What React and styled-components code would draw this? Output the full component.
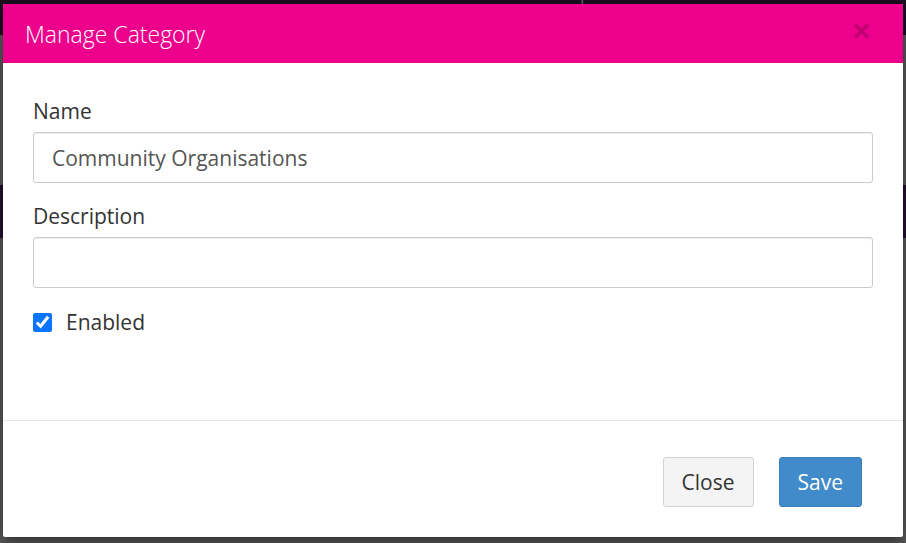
import React from 'react'
import styled, {createGlobalStyle} from 'styled-components'

const Global = createGlobalStyle`
  html, body {
    margin: 0;
    padding: 0;
    background: #5b5b5b;
    font-family: 'Open Sans', 'Liberation Sans', sans-serif;
  }
  * { box-sizing: border-box; }
`

const Page = styled.div`
  position: relative;
  width: 906px;
  height: 543px;
  overflow: hidden;
  display: flex;
  flex-direction: column;
  background: #5b5b5b;
`

const NavBar = styled.div`
  height: 35px;
  background: #1b0e20;
  display: flex;
  gap: 28px;
  padding-left: 4px;
  font-size: 24px;
  font-weight: 300;
  color: #7d7680;
  white-space: nowrap;
  span {
    margin-top: -24px;
    line-height: 30px;
  }
`

const Band = styled.div`
  margin-top: 150px;
  height: 53px;
  background: #24112f;
`

const Modal = styled.div`
  position: absolute;
  left: 3px;
  top: 4px;
  width: 900px;
  height: 533px;
  background: #fff;
  border-radius: 2px;
  box-shadow: 0 5px 15px rgba(0, 0, 0, 0.5);
  display: flex;
  flex-direction: column;
  color: #333;
`

const Header = styled.div`
  height: 59px;
  background: #ec008c;
  display: flex;
  align-items: center;
  justify-content: space-between;
  padding: 0 33px 0 22px;
  border-radius: 2px 2px 0 0;
`

const Title = styled.h4`
  margin: 0;
  font-size: 23px;
  font-weight: 300;
  color: #fff;
`

const CloseX = styled.button`
  border: 0;
  background: none;
  padding: 0;
  margin-top: -6px;
  font-family: 'Liberation Sans', sans-serif;
  font-size: 30px;
  font-weight: 700;
  line-height: 1;
  color: #000;
  opacity: 0.2;
`

const Body = styled.div`
  flex: 1;
  padding: 34px 30px 0;
  border-bottom: 1px solid #e5e5e5;
`

const Group = styled.div`
  margin-bottom: ${p => p.$gap || 0}px;
`

const Label = styled.label`
  display: block;
  font-size: 21px;
  line-height: 29px;
  margin-bottom: 6px;
  color: #333;
`

const Input = styled.input`
  display: block;
  width: 100%;
  height: 51px;
  padding: 0 18px;
  border: 1px solid #ccc;
  border-radius: 3px;
  box-shadow: inset 0 1px 1px rgba(0, 0, 0, 0.075);
  font-family: inherit;
  font-size: 21px;
  color: #555;
  outline: none;
`

const Check = styled.label`
  display: flex;
  align-items: center;
  gap: 14px;
  margin-top: 20px;
  font-size: 21px;
  color: #333;
  input {
    width: 19px;
    height: 19px;
    margin: 0;
    accent-color: #0b75ff;
  }
`

const Footer = styled.div`
  height: 116px;
  display: flex;
  justify-content: flex-end;
  align-items: flex-start;
  gap: 25px;
  padding: 36px 41px 0 0;
`

const Button = styled.button`
  height: 50px;
  padding: 0 18px;
  border-radius: 3px;
  font-family: inherit;
  font-size: 21px;
  border: 1px solid ${p => (p.$primary ? '#3a80bd' : '#d2d2d2')};
  background: ${p => (p.$primary ? '#428bca' : '#f4f4f4')};
  color: ${p => (p.$primary ? '#fff' : '#333')};
`

export default function App() {
  return (
    <Page>
      <Global />
      <NavBar>
        <span>Grants</span>
        <span>Invoice</span>
        <span>Actions</span>
        <span>Artworks ▾</span>
        <span>Artists</span>
        <span>Reports</span>
      </NavBar>
      <Band />
      <Modal>
        <Header>
          <Title>Manage Category</Title>
          <CloseX>×</CloseX>
        </Header>
        <Body>
          <Group $gap={19}>
            <Label>Name</Label>
            <Input defaultValue="Community Organisations" />
          </Group>
          <Group>
            <Label>Description</Label>
            <Input defaultValue="" />
          </Group>
          <Check>
            <input type="checkbox" defaultChecked />
            Enabled
          </Check>
        </Body>
        <Footer>
          <Button>Close</Button>
          <Button $primary>Save</Button>
        </Footer>
      </Modal>
    </Page>
  )
}
